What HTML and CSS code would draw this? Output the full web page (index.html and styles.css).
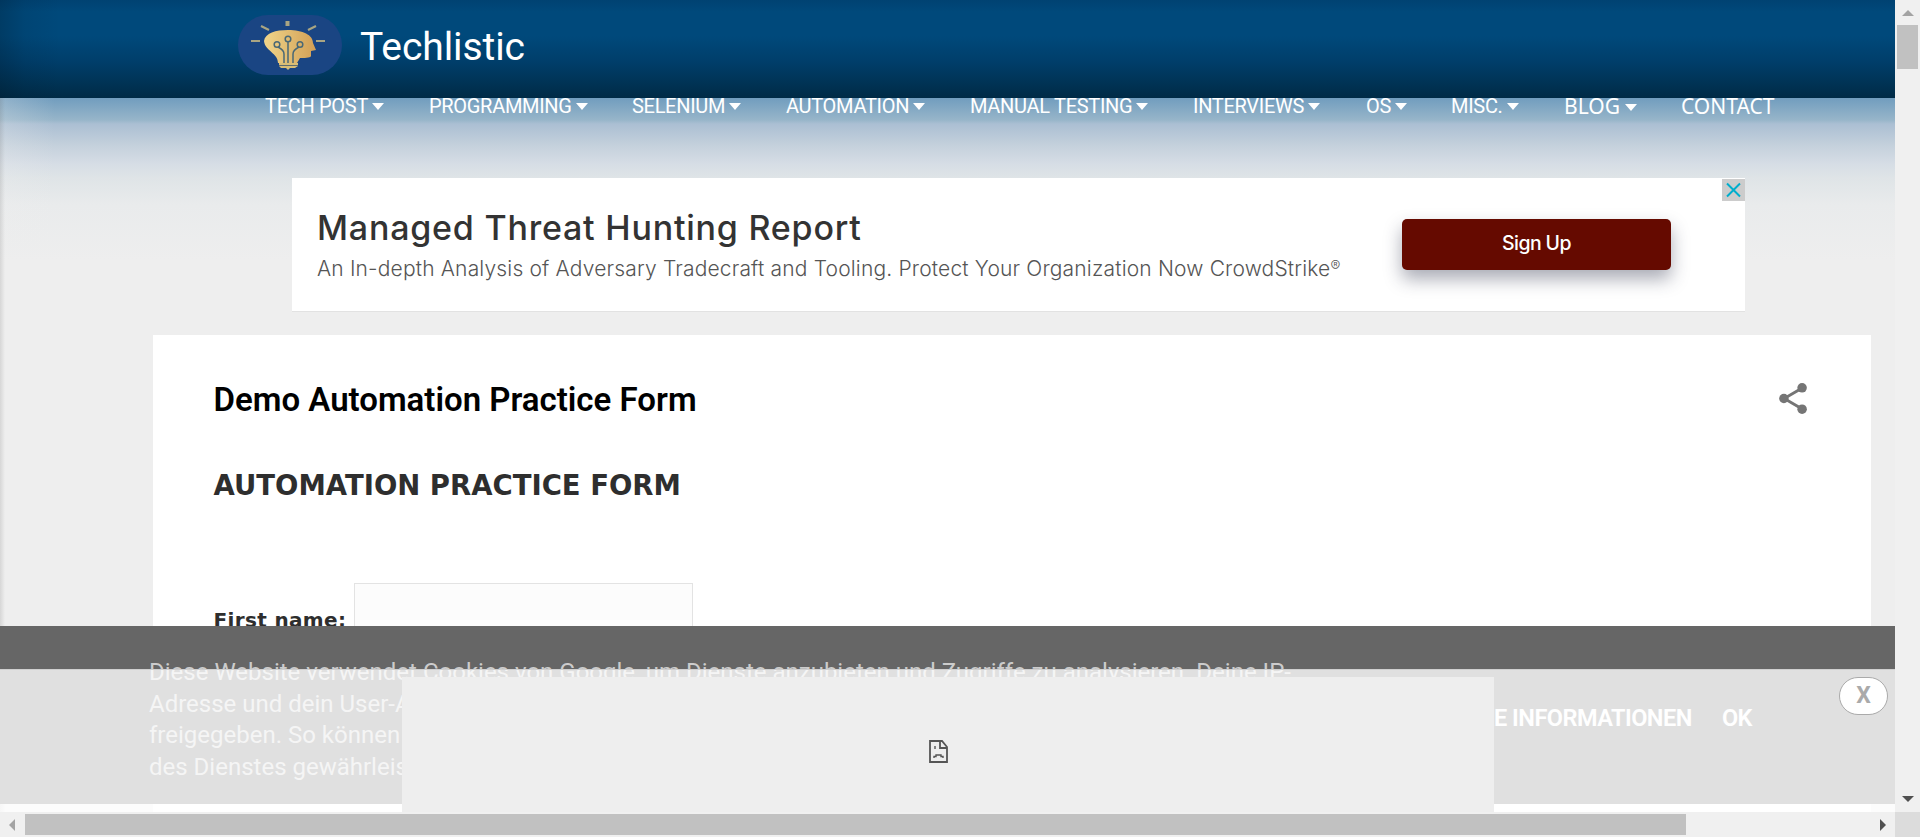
FILE: index.html
```html
<!DOCTYPE html>
<html lang="de">
<head>
<meta charset="utf-8">
<title>Demo Automation Practice Form</title>
<link rel="stylesheet" href="styles.css">
</head>
<body>
<div class="window">
  <div class="view">
    <header class="header">
      <svg class="logo" viewBox="0 0 104 60">
        <defs><linearGradient id="gold" x1="0" x2="1"><stop offset="0" stop-color="#f0d58a"/><stop offset="1" stop-color="#d29f55"/></linearGradient></defs>
        <rect width="104" height="60" rx="30" fill="#1a4583"/>
        <g stroke="#a9a583" stroke-width="2.2"><path d="M49.500 6v5" stroke-width="4"/><path d="M23 11l8 4M78 11l-8 4M13 26h9M78 26h9"/></g>
        <path d="M26 26C27 18 38 15 50 15C65 15 75 20 75 28L78 35L73 36V41Q73 43 62 43L59 48H40C40 38 27 36 26 26Z" fill="url(#gold)"/>
        <path d="M41 48h19v3l-3 2h-5l-2 2-2-2h-5l-2-2z" fill="#d8bd75"/>
        <path d="M41 50.500h19" stroke="#5d6b70"/>
        <g fill="none" stroke="#4a6875" stroke-width="1.500"><circle cx="50" cy="24" r="2.800"/><circle cx="39" cy="29.500" r="2.800"/><circle cx="62" cy="29.500" r="2.800"/><path d="M50 27v21M40 32q6 3 6 7v9M61 32q-6 3-6 7v9"/></g>
      </svg>
      <span class="brand">Techlistic</span>
    </header>
    <nav class="nav">
      <a class="item w1">TECH POST<i></i></a>
      <a class="item w2">PROGRAMMING<i></i></a>
      <a class="item w3">SELENIUM<i></i></a>
      <a class="item w4">AUTOMATION<i></i></a>
      <a class="item w5">MANUAL TESTING<i></i></a>
      <a class="item w6">INTERVIEWS<i></i></a>
      <a class="item w7">OS<i></i></a>
      <a class="item w8">MISC.<i></i></a>
      <a class="item alt w9">BLOG<i></i></a>
      <a class="item alt">CONTACT</a>
    </nav>
    <section class="ad">
      <div class="ad-copy"><div class="ad-title">Managed Threat Hunting Report</div><div class="ad-sub">An In-depth Analysis of Adversary Tradecraft and Tooling. Protect Your Organization Now CrowdStrike<span class="reg">®</span></div></div>
      <a class="signup">Sign Up</a>
      <svg class="ad-close" viewBox="0 0 23 22"><path fill="#ccc" d="M0 0h23v22H0z"/><path d="M5 4.500l13 13M18 4.500l-13 13" stroke="#00aecd" stroke-width="2"/></svg>
    </section>
    <main class="post">
      <div class="post-head">
        <h1>Demo Automation Practice Form</h1>
        <svg class="share" viewBox="0 0 27 30"><path d="M22 5L5 15l17 10" fill="none" stroke="#757575" stroke-width="2.800"/><g fill="#757575"><circle cx="22.300" cy="4.700" r="4.600"/><circle cx="4.700" cy="15" r="4.600"/><circle cx="22.300" cy="25.300" r="4.600"/></g></svg>
      </div>
      <h2>AUTOMATION PRACTICE FORM</h2>
      <div class="field"><label>First name:</label><span class="input"></span></div>
    </main>
    <div class="cookie">
      <p class="cookie-text">Diese Website verwendet Cookies von Google, um Dienste anzubieten und Zugriffe zu analysieren. Deine IP-<br>Adresse und dein User-Agent werden zusammen mit Messwerten zur Leistung und Sicherheit für<br>freigegeben. So können Nutzungsstatistiken generiert, Missbrauchsfälle erkannt und die Qualität<br>des Dienstes gewährleistet werden.</p>
      <div class="cookie-links"><a>WEITERE INFORMATIONEN</a><a>OK</a></div>
    </div>
    <div class="anchor">
      <div class="frame"><svg class="broken" viewBox="0 0 19 23"><path d="M1 1h12l5 6v15H1zM11 1v7h7" fill="none" stroke="#555" stroke-width="1.800"/><path d="M6 6v3M5 18v-1.500h2V15h5v1.500h2V18" fill="none" stroke="#555" stroke-width="1.400"/></svg></div>
      <span class="dismiss">X</span>
    </div>
  </div>
  <div class="vbar"><svg viewBox="0 0 12 6"><path d="M0 6l6-6 6 6z" fill="#a3a3a3"/></svg><div class="vthumb"></div><svg viewBox="0 0 12 6"><path d="M0 0l6 6 6-6z" fill="#505050"/></svg></div>
  <div class="hbar"><svg viewBox="0 0 6 12"><path d="M6 0L0 6l6 6z" fill="#a3a3a3"/></svg><div class="hthumb"></div><svg viewBox="0 0 6 12"><path d="M0 0l6 6-6 6z" fill="#505050"/></svg></div>
  <div class="corner"></div>
</div>
</body>
</html>
```
FILE: styles.css
```css
* { box-sizing: border-box; }
body { margin: 0; overflow: hidden; font-family: Roboto, sans-serif; }
h1, h2, p { margin: 0; }
.window { display: grid; grid-template-columns: 1895px 25px; grid-template-rows: 812px 25px; width: 1920px; height: 837px; }
.view {
  position: relative; overflow: hidden; display: flex; flex-direction: column;
  background:
    linear-gradient(90deg, rgba(80,80,80,.15), rgba(80,80,80,0) 5px),
    linear-gradient(90deg, rgba(238,238,238,.25), rgba(238,238,238,0) 55px),
    linear-gradient(#719dbe 98px, #97b5c9 120px, #abbfd3 124px, #c5d1dc 146px, #d6dde5 164px, #dfe4e7 178px, #e9ebec 205px, #eee 260px);
}
.header {
  flex: none; height: 98px; padding: 15px 0 0 238px; display: flex; gap: 18px;
  background: linear-gradient(90deg, rgba(0,20,35,.25), rgba(0,20,35,.08) 25px, rgba(0,20,35,0) 60px), linear-gradient(#004272, #00497b 12px, #00497b 36px, #003e6a 62px, #002b46 98px);
}
.logo { width: 104px; height: 60px; }
.brand { color: #fff; font-size: 39px; letter-spacing: -.08px; line-height: 64px; height: 60px; }
.nav { flex: none; height: 80px; padding-left: 265px; display: flex; color: #fff; font-size: 20px; line-height: 17px; white-space: nowrap; }
.item { display: flex; flex: none; letter-spacing: -.3px; }
.item i { width: 0; margin: 5px 0 0 4px; height: 7px; border: 6.5px solid transparent; border-top: 7px solid #fff; border-bottom: 0; }
.w1 { width: 164px; } .w2 { width: 203px; } .w3 { width: 154px; } .w4 { width: 184px; } .w5 { width: 223px; }
.w6 { width: 173px; } .w7 { width: 85px; } .w8 { width: 113px; } .w9 { width: 117px; }
.alt { font-family: "Noto Sans", sans-serif; font-size: 21px; letter-spacing: 0; }
.alt i { margin: 6px 0 0 5px; }
.ad { flex: none; position: relative; width: 1453px; height: 133px; margin-left: 292px; padding: 0 74px 0 25px; display: flex; justify-content: space-between; background: #fff; box-shadow: 0 1px #e2e2e2; }
.ad-copy { white-space: nowrap; padding-top: 30px; font-family: Inter, sans-serif; }
.ad-title { font-size: 34px; line-height: 40px; font-weight: 500; letter-spacing: .78px; color: #333; }
.ad-sub { font-size: 21px; line-height: 42px; font-weight: 300; letter-spacing: .17px; color: #555; }
.reg { font-size: .7em; vertical-align: 5px; line-height: 0; }
.signup { width: 269px; height: 51px; margin-top: 41px; border-radius: 5px; background: #650a00; color: #fff; font: 500 19.5px/49px Inter, sans-serif; letter-spacing: -.6px; text-align: center; box-shadow: 0 9px 18px rgba(40,45,70,.4); }
.ad-close { position: absolute; right: 0; top: 1px; width: 23px; height: 22px; }
.post { flex: none; width: 1718px; height: 500px; margin: 24px 0 0 153px; padding: 45px 64px 0 60.5px; background: #fff; }
.post-head { display: flex; justify-content: space-between; height: 84px; }
h1 { font-size: 33px; line-height: 40px; font-weight: 600; color: #000; white-space: nowrap; }
.share { width: 28px; height: 31px; margin-top: 3px; }
h2 { font: bold 27.5px/42px "DejaVu Sans", sans-serif; color: #2e2e2e; height: 119px; white-space: nowrap; }
.field { display: flex; }
label { width: 140.5px; padding-top: 25px; font: bold 20px/24px "DejaVu Sans", sans-serif; letter-spacing: .35px; color: #2e2e2e; white-space: nowrap; }
.input { width: 339px; height: 76px; border: 1px solid #e3e3e3; background: #fcfcfc; }
.cookie { position: absolute; left: 0; top: 626px; width: 1895px; height: 178px; padding: 31px 143px 0 149px; display: flex; justify-content: space-between; background: #666; color: #ccc; }
.cookie-text { font-size: 24px; line-height: 31.6px; white-space: nowrap; }
.cookie-links { display: flex; gap: 30px; padding-top: 45px; color: #fff; font-size: 23.5px; letter-spacing: -.5px; line-height: 32px; font-weight: 600; white-space: nowrap; }
.anchor { position: absolute; left: 0; top: 669px; width: 1895px; height: 143px; padding: 7px 7px 0 402px; display: flex; justify-content: space-between; background: rgba(255,255,255,.8); border-top: 1px solid #d0d0d0; }
.frame { width: 1092px; height: 135px; background: #eee; display: flex; justify-content: center; padding-top: 63px; padding-right: 19px; }
.broken { width: 19px; height: 23px; }
.dismiss { width: 49px; height: 38px; border: 1px solid #aaa; border-radius: 19px; background: #fff; color: #aaa; font-size: 23px; line-height: 36px; font-weight: 700; text-align: center; }
.vbar { background: #f0f0f0; display: flex; flex-direction: column; align-items: center; padding: 10px 0; }
.vbar svg { width: 12px; height: 6px; flex: none; }
.vthumb { width: 21px; height: 44px; margin: 9px 0 auto; background: #c1c1c1; }
.hbar { background: #f0f0f0; display: flex; align-items: center; padding: 0 9px; }
.hbar svg { width: 6px; height: 12px; flex: none; }
.hthumb { width: 1661px; height: 21px; margin: 0 auto 0 10px; background: #c1c1c1; }
.corner { background: #dcdcdc; }
```
